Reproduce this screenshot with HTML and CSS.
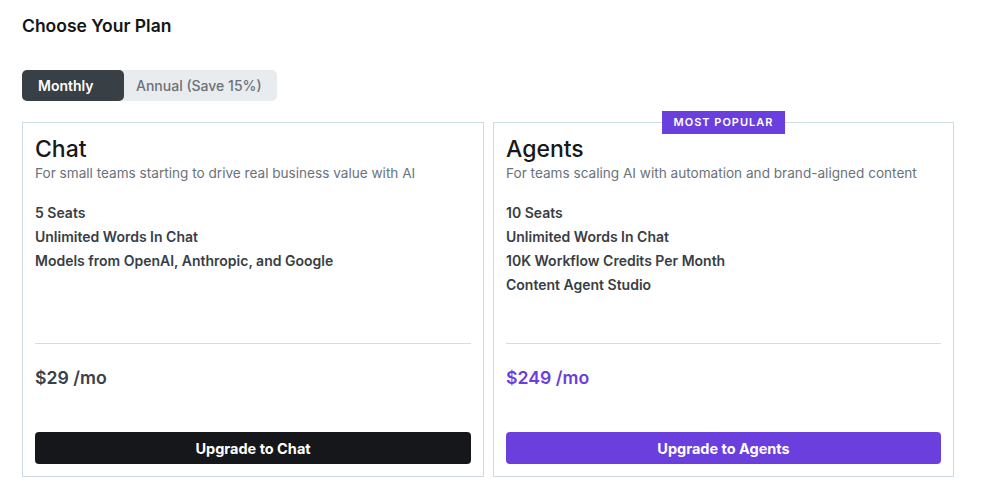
FILE: index.html
```html
<!DOCTYPE html>
<html lang="en">
<head>
<meta charset="UTF-8" />
<title>Choose Your Plan</title>
<link rel="stylesheet" href="styles.css">
</head>
<body>

<div id="page">
  <h1 class="page-title">Choose Your Plan</h1>

  <div class="billing-toggle">
    <button class="toggle-btn active">Monthly</button>
    <button class="toggle-btn">Annual (Save 15%)</button>
  </div>

  <div class="plans">
    <div class="plan">
      <h2 class="plan-name">Chat</h2>
      <p class="plan-desc">For small teams starting to drive real business value with AI</p>
      <ul class="features">
        <li>5 Seats</li>
        <li>Unlimited Words In Chat</li>
        <li>Models from OpenAI, Anthropic, and Google</li>
      </ul>
      <hr class="divider">
      <div class="price">$29 /mo</div>
      <button class="upgrade-btn">Upgrade to Chat</button>
    </div>

    <div class="plan featured">
      <div class="badge">Most Popular</div>
      <h2 class="plan-name">Agents</h2>
      <p class="plan-desc">For teams scaling AI with automation and brand-aligned content</p>
      <ul class="features">
        <li>10 Seats</li>
        <li>Unlimited Words In Chat</li>
        <li>10K Workflow Credits Per Month</li>
        <li>Content Agent Studio</li>
      </ul>
      <hr class="divider">
      <div class="price">$249 /mo</div>
      <button class="upgrade-btn">Upgrade to Agents</button>
    </div>
  </div>
</div>

</body>
</html>
```

FILE: styles.css
```css
html, body {
  margin: 0; padding: 0;
  background: #fff;
  font-family: 'Inter', 'Noto Sans', sans-serif;
  color: #1b1d20;
}
#page {
  padding: 14px 28px 0 22px;
}
.page-title {
  margin: 0;
  font-size: 17.5px;
  line-height: 24px;
  font-weight: 600;
  color: #141518;
}
.billing-toggle {
  display: inline-flex;
  margin-top: 32px;
  height: 31px;
  background: #e9ecef;
  border-radius: 5px;
}
.toggle-btn {
  border: none;
  background: transparent;
  font-family: inherit;
  font-size: 14px;
  font-weight: 500;
  color: #6b7177;
  padding: 0 15px 0 12px;
  border-radius: 5px;
  cursor: pointer;
}
.toggle-btn.active {
  width: 102px;
  text-align: left;
  padding-left: 16px;
  background: #383f45;
  color: #fff;
  font-weight: 600;
}
.plans {
  display: grid;
  grid-template-columns: 462px 461px;
  gap: 9px;
  margin-top: 21px;
}
.plan {
  position: relative;
  display: flex;
  flex-direction: column;
  border: 1px solid #cddbe2;
  padding: 12px;
}
.plan-name {
  margin: 0;
  font-size: 23px;
  line-height: 28px;
  font-weight: 500;
  color: #16181b;
}
.plan-desc {
  margin: 0;
  font-size: 13.6px;
  line-height: 20px;
  color: #6a727b;
}
.features {
  list-style: none;
  margin: 18px 0 46px;
  padding: 0;
  flex: 1;
}
.features li {
  font-size: 14px;
  line-height: 24px;
  font-weight: 600;
  color: #383e44;
}
.divider {
  margin: 0;
  border: none;
  border-top: 1px solid #d3dde3;
}
.price {
  margin-top: 20px;
  font-size: 17.7px;
  line-height: 28px;
  font-weight: 600;
  color: #3a4046;
}
.upgrade-btn {
  margin-top: 40px;
  height: 32px;
  border: none;
  border-radius: 4px;
  background: #16171a;
  color: #fff;
  font-family: inherit;
  font-size: 14.5px;
  font-weight: 700;
  cursor: pointer;
}
.featured .price {
  color: #6a3fde;
}
.featured .upgrade-btn {
  background: #6a3fde;
}
.badge {
  position: absolute;
  top: -12px;
  left: 50%;
  transform: translateX(-50%);
  background: #6a3fde;
  color: #fff;
  font-size: 11px;
  line-height: 23px;
  font-weight: 600;
  letter-spacing: 1px;
  text-transform: uppercase;
  padding: 0 12px;
}
```
